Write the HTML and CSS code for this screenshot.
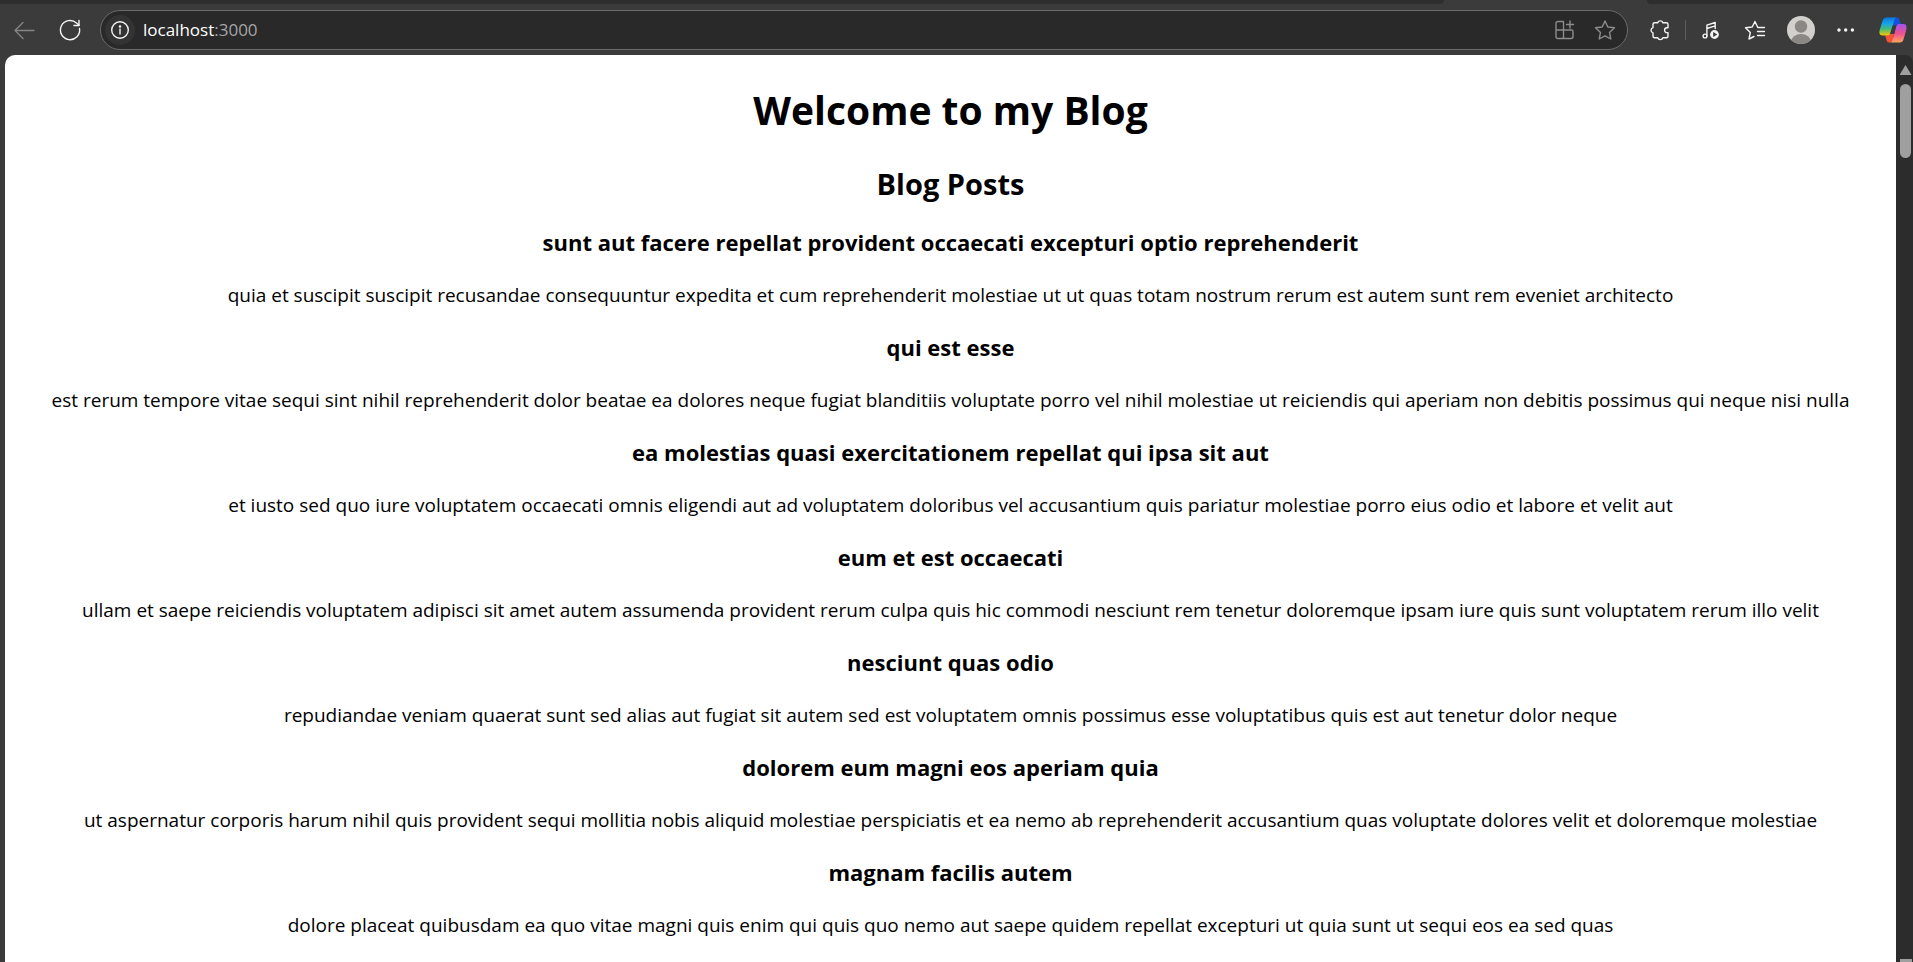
FILE: index.html
```html
<!DOCTYPE html>
<html lang="en">
<head>
<meta charset="utf-8">
<title>Welcome to my Blog</title>
<link rel="stylesheet" href="styles.css">
</head>
<body>
<div class="tabstrip"><span class="tabs-before"></span><span class="tabs-active"></span><span class="tabs-after"></span></div>
<header class="toolbar">
  <button class="tool back" aria-label="Back" disabled><svg width="24" height="24" viewBox="0 0 24 24"><path d="M22 12.500H3M11 4.500L3 12.500l8 8"/></svg></button>
  <button class="tool reload" aria-label="Refresh"><svg width="24" height="24" viewBox="0 0 24 24"><path d="M21.500 10.500a9.600 9.600 0 1 1-3-5.500l2.500 2.200"/><path d="M21 2.500v5h-5"/></svg></button>
  <form class="address">
    <button type="button" class="site-info" aria-label="View site information"><svg width="20" height="20" viewBox="0 0 20 20"><circle cx="10" cy="10" r="8.300"/><path d="M10 9v5"/><circle class="solid" cx="10" cy="6.500" r=".6"/></svg></button>
    <button type="button" class="url">localhost<span class="port">:3000</span></button>
    <button type="button" class="tool dim" aria-label="App available"><svg width="24" height="24" viewBox="0 0 24 24"><path d="M5 3.500h5.500v17H5a2 2 0 0 1-2-2v-13a2 2 0 0 1 2-2zM3 12h15.500a1.500 1.500 0 0 1 1.500 1.500v5a2 2 0 0 1-2 2h-7.500M17 3v7M13.500 6.500h7"/></svg></button>
    <button type="button" class="tool dim" aria-label="Add to favorites"><svg width="24" height="24" viewBox="0 0 24 24"><path d="M12 3l2.800 6 6.700.8-5 4.600 1.300 6.600-5.800-3.200L6.200 21l1.300-6.600-5-4.600 6.700-.8z"/></svg></button>
  </form>
  <nav class="actions">
    <button class="tool" aria-label="Extensions"><svg width="24" height="24" viewBox="0 0 24 24"><path d="M6.500 4.800h3.200a2.700 2.700 0 0 1 5.200 0h3.600a1.500 1.500 0 0 1 1.500 1.500v3.500h-1a2.400 2.400 0 0 0 0 4.800h1v3.600a1.500 1.500 0 0 1-1.500 1.500h-3.600a2.700 2.700 0 0 1-5.200 0H6.500A1.500 1.500 0 0 1 5 18.200v-3.400a2.700 2.700 0 0 1 0-5.200V6.300a1.500 1.500 0 0 1 1.500-1.500z"/></svg></button>
    <span class="divider"></span>
    <button class="tool" aria-label="Media controls"><svg width="24" height="24" viewBox="0 0 24 24"><circle cx="6" cy="18" r="1.900"/><path d="M7.900 18V7.200l8.300-2.700v6M7.900 10.500l8.300-2.700"/><circle class="solid" cx="15.500" cy="16.500" r="3.700"/><path class="cut" d="M14.200 14.100v4.800l4-2.400z"/></svg></button>
    <button class="tool" aria-label="Favorites"><svg width="24" height="24" viewBox="0 0 24 24"><path d="M21.500 9.500h-6.700L12 3.500 9.200 9l-6.700.8 4.800 4.700L6 21l5-2.500M14.500 13.500h7M14.500 17.500h7"/></svg></button>
    <button class="tool avatar" aria-label="Profile"><svg width="28" height="28" viewBox="0 0 28 28"><clipPath id="face"><circle cx="14" cy="14" r="14"/></clipPath><g clip-path="url(#face)"><rect class="face-bg" width="28" height="28"/><circle class="face-fg" cx="14" cy="10.500" r="6.200"/><ellipse class="face-fg" cx="14" cy="25.500" rx="9.800" ry="7.500"/></g></svg></button>
    <button class="tool" aria-label="Settings and more"><svg width="24" height="24" viewBox="0 0 24 24"><circle class="solid" cx="4" cy="12" r="1"/><circle class="solid" cx="10.700" cy="12" r="1"/><circle class="solid" cx="17.400" cy="12" r="1"/></svg></button>
    <button class="tool copilot" aria-label="Copilot"><svg width="28" height="28" viewBox="0 0 28 28">
      <defs>
        <linearGradient id="cool" x1="0" y1="0" x2="0" y2="1"><stop offset="0" stop-color="#0a78dc"/><stop offset=".35" stop-color="#16a5e6"/><stop offset=".65" stop-color="#47bd74"/><stop offset="1" stop-color="#f8c808"/></linearGradient>
        <linearGradient id="warm" x1="0" y1="0" x2="0" y2="1"><stop offset="0" stop-color="#a055f2"/><stop offset=".5" stop-color="#ee4f92"/><stop offset="1" stop-color="#ffa45c"/></linearGradient>
      </defs>
      <path fill="#1450dd" d="M13 1.500h5c2 0 2.500 2 3.200 4.500L22 8h-2c-1.500 0-2.300.5-2.700 1.500H13.500z"/>
      <path fill="#f45338" d="M6 19.500l2-.1c1.400-.1 2.200-.6 2.700-1.600H15l-1 7-3 1.700h-1c-2 0-2.200-1.500-2.700-3.500z"/>
      <path fill="url(#cool)" d="M7.500 1.500H18c-1.700 0-2.500 1.500-3.200 4.500l-3.200 10.500c-.7 2.500-2 3-4 3H3.500C0 19.500 0 16 1 13L3.500 5c.8-2.500 2-3.500 4-3.500z"/>
      <path fill="url(#warm)" d="M20 8h4.500C28 8 28 11.500 27 15l-2.200 7.500c-.8 3-2 4-4.300 4H10.500c2 0 2.800-1.500 3.500-4l3.200-12c.4-1.700 1.200-2.500 2.800-2.500z"/>
      <path fill="#3b3b3b" d="M13.800 9.500h3.500L15.100 17.800h-3.900z"/>
    </svg></button>
  </nav>
</header>
<div class="window">
  <main class="page">
    <h1>Welcome to my Blog</h1>
    <h2>Blog Posts</h2>
    <article><h3>sunt aut facere repellat provident occaecati excepturi optio reprehenderit</h3><p>quia et suscipit suscipit recusandae consequuntur expedita et cum reprehenderit molestiae ut ut quas totam nostrum rerum est autem sunt rem eveniet architecto</p></article>
    <article><h3>qui est esse</h3><p>est rerum tempore vitae sequi sint nihil reprehenderit dolor beatae ea dolores neque fugiat blanditiis voluptate porro vel nihil molestiae ut reiciendis qui aperiam non debitis possimus qui neque nisi nulla</p></article>
    <article><h3>ea molestias quasi exercitationem repellat qui ipsa sit aut</h3><p>et iusto sed quo iure voluptatem occaecati omnis eligendi aut ad voluptatem doloribus vel accusantium quis pariatur molestiae porro eius odio et labore et velit aut</p></article>
    <article><h3>eum et est occaecati</h3><p>ullam et saepe reiciendis voluptatem adipisci sit amet autem assumenda provident rerum culpa quis hic commodi nesciunt rem tenetur doloremque ipsam iure quis sunt voluptatem rerum illo velit</p></article>
    <article><h3>nesciunt quas odio</h3><p>repudiandae veniam quaerat sunt sed alias aut fugiat sit autem sed est voluptatem omnis possimus esse voluptatibus quis est aut tenetur dolor neque</p></article>
    <article><h3>dolorem eum magni eos aperiam quia</h3><p>ut aspernatur corporis harum nihil quis provident sequi mollitia nobis aliquid molestiae perspiciatis et ea nemo ab reprehenderit accusantium quas voluptate dolores velit et doloremque molestiae</p></article>
    <article><h3>magnam facilis autem</h3><p>dolore placeat quibusdam ea quo vitae magni quis enim qui quis quo nemo aut saepe quidem repellat excepturi ut quia sunt ut sequi eos ea sed quas</p></article>
  </main>
  <div class="scrollbar"><span class="arrow"></span><span class="thumb"></span><span class="arrow-down"></span></div>
</div>
</body>
</html>
```
FILE: styles.css
```css
* { box-sizing: border-box; }
body {
  margin: 0;
  height: 100vh;
  display: flex;
  flex-direction: column;
  overflow: hidden;
  background: #3b3b3b;
  font-family: "Segoe UI", "Open Sans", "Noto Sans", sans-serif;
}
button { font: inherit; color: inherit; background: none; border: 0; padding: 0; }
svg { display: block; fill: none; stroke: currentColor; stroke-width: 1.4; stroke-linecap: round; stroke-linejoin: round; }
.solid { fill: currentColor; }
.cut { fill: #3b3b3b; stroke: none; }

.tabstrip { display: flex; height: 4px; flex: none; }
.tabs-before { flex: 1; background: #2e2e2e; border-bottom-right-radius: 8px; }
.tabs-active { width: 203px; }
.tabs-after { width: 266px; background: #2e2e2e; border-bottom-left-radius: 8px; }

.toolbar { display: flex; align-items: center; flex: none; height: 51px; padding: 1px 6px 0 12px; color: #f4f4f4; }
.tool { display: grid; place-items: center; width: 24px; height: 32px; flex: none; }
.back { color: #858585; }
.reload { margin-left: 22px; }
.address {
  flex: 1;
  display: flex;
  align-items: center;
  height: 40px;
  margin: 0 20px 0 18px;
  padding: 0 10px 0 4px;
  border: 1px solid #6b6b6b;
  border-radius: 20px;
  background: #292929;
}
.site-info { display: grid; place-items: center; width: 30px; height: 30px; border-radius: 50%; background: #333333; }
.url { flex: 1; padding-left: 8px; text-align: left; font-size: 17px; line-height: 24px; color: #ffffff; }
.port { color: #a5a5a5; }
.dim { color: #8c8c8c; margin-left: 16px; }
.actions { display: flex; align-items: center; gap: 20px; }
.divider { width: 1px; height: 20px; margin: 0 -7px; background: #5e5e5e; }
.avatar svg, .copilot svg { stroke: none; }
.avatar, .copilot { width: 28px; }
.face-bg { fill: #d2d0cc; }
.face-fg { fill: #8b8783; }

.window { flex: 1; min-height: 0; display: flex; padding-left: 5px; }
.page { flex: 1; overflow: hidden; padding: 28px 10px; background: #ffffff; border-top-left-radius: 10px; color: #000000; text-align: center; }
h1, h2, h3, p { margin: 0; }
h1 { font-size: 39px; line-height: 54px; font-weight: 700; margin-bottom: 27px; }
h2 { font-size: 29px; line-height: 40px; font-weight: 700; margin-bottom: 23px; }
h3 { font-size: 22px; line-height: 30px; font-weight: 700; margin-bottom: 25px; }
p { font-size: 19px; line-height: 27px; margin-bottom: 23px; }

.scrollbar { width: 17px; display: flex; flex-direction: column; align-items: center; padding-top: 10px; padding-left: 2px; background: #2c2c2c; border-top-right-radius: 8px; }
.arrow { width: 12px; height: 10px; background: #9f9f9f; clip-path: polygon(50% 0, 100% 100%, 0 100%); }
.thumb { width: 11px; height: 74px; margin-top: 9px; border-radius: 6px; background: #9f9f9f; }
.arrow-down { width: 12px; height: 3px; margin-top: auto; background: #9f9f9f; }
```
